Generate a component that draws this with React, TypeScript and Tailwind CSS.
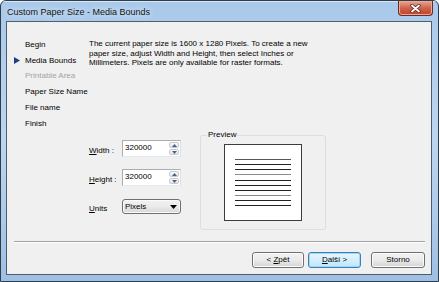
import React from 'react';

const font = "font-['Liberation_Sans',Arial,sans-serif]";

const steps = [
  { label: 'Begin', state: 'done' },
  { label: 'Media Bounds', state: 'current' },
  { label: 'Printable Area', state: 'disabled' },
  { label: 'Paper Size Name', state: 'done' },
  { label: 'File name', state: 'done' },
  { label: 'Finish', state: 'done' },
];

const SpinBox: React.FC<{ value: string }> = ({ value }) => (
  <div className="flex w-[59px] h-[17px] border border-[#abadb3] border-r-[#dbdfe6] border-b-[#e3e9ef] bg-white">
    <span className="flex-1 pl-[2px] pt-[2px] text-[8px] leading-[10px] text-black">{value}</span>
    <div className="flex flex-col w-[11px] py-px pr-px gap-px">
      <div className="flex-1 flex items-center justify-center rounded-[2px] border border-[#c7cbd1] bg-gradient-to-b from-[#fafafa] to-[#e3e6ea]">
        <svg width="5" height="3" viewBox="0 0 5 3"><polygon points="2.5,0 5,3 0,3" fill="#4d6185" /></svg>
      </div>
      <div className="flex-1 flex items-center justify-center rounded-[2px] border border-[#c7cbd1] bg-gradient-to-b from-[#fafafa] to-[#e3e6ea]">
        <svg width="5" height="3" viewBox="0 0 5 3"><polygon points="0,0 5,0 2.5,3" fill="#4d6185" /></svg>
      </div>
    </div>
  </div>
);

const Button: React.FC<{ children: React.ReactNode; w: string; primary?: boolean }> = ({ children, w, primary }) => (
  <button
    className={
      primary
        ? `${w} h-[16px] rounded-[3px] border border-[#3c7fb1] bg-gradient-to-b from-[#eaf6fd] to-[#bee6fd] text-[8px] leading-[14px] text-black shadow-[inset_0_0_0_1px_#9fd5f5]`
        : `${w} h-[16px] rounded-[3px] border border-[#707070] bg-gradient-to-b from-[#f2f2f2] via-[#ebebeb] to-[#d4d4d4] text-[8px] leading-[14px] text-black shadow-[inset_0_0_0_1px_#fcfcfc]`
    }
  >
    {children}
  </button>
);

export default function App() {
  return (
    <div className={`${font} relative w-[439px] h-[282px] flex flex-col border border-[#2f3d4b] rounded-t-[6px] bg-gradient-to-b from-[#a9c9ea] via-[#bcd6f1] to-[#9fc0e3] overflow-hidden`}>
      <div className="h-[20px] flex items-center pl-[6px] border-t border-t-[#dbe8f6]">
        <span className="text-[9px] leading-[12px] text-[#141414] [text-shadow:0_0_6px_#ffffff]">
          Custom Paper Size - Media Bounds
        </span>
      </div>

      <div className="absolute top-0 right-[5px] w-[35px] h-[15px] flex items-center justify-center rounded-b-[4px] border border-t-0 border-[#6e2a20] bg-gradient-to-b from-[#e5a796] via-[#d0634b] to-[#c0402a] shadow-[inset_0_0_0_1px_#eda996]">
        <svg width="11" height="9" viewBox="0 0 11 9">
          <path d="M2 1.5 L9 7.5 M9 1.5 L2 7.5" stroke="#5a2a24" strokeWidth="3.4" strokeLinecap="round" />
          <path d="M2 1.5 L9 7.5 M9 1.5 L2 7.5" stroke="#ffffff" strokeWidth="1.8" strokeLinecap="round" />
        </svg>
      </div>

      <div className="flex-1 ml-[5px] mr-[6px] mb-[6px] flex flex-col border border-[#4e5d6c] bg-[#f0f0f0] text-black">
        <div className="flex-1 flex">
          <div className="w-[82px] pt-[15px] pl-[7px] flex flex-col">
            {steps.map((s) => (
              <div key={s.label} className="h-[15.8px] flex items-center">
                <span className="w-[11px] flex items-center">
                  {s.state === 'current' && (
                    <svg width="6" height="7" viewBox="0 0 6 7"><polygon points="0,0 6,3.5 0,7" fill="#1f3d85" /></svg>
                  )}
                </span>
                <span className={`text-[8px] leading-[10px] whitespace-nowrap ${s.state === 'disabled' ? 'text-[#a3a3a3]' : 'text-black'}`}>
                  {s.label}
                </span>
              </div>
            ))}
          </div>

          <div className="flex-1 flex flex-col pt-[17px]">
            <p className="text-[8px] leading-[9.7px] whitespace-nowrap">
              The current paper size is 1600 x 1280 Pixels. To create a new
              <br />
              paper size, adjust Width and Height, then select Inches or
              <br />
              Millimeters. Pixels are only available for raster formats.
            </p>

            <div className="flex mt-[67px]">
              <div className="w-[111px] pt-[5px] flex flex-col">
                <div className="flex items-center h-[17px]">
                  <span className="w-[33px] text-[8px] leading-[10px] pt-[5px]"><u>W</u>idth :</span>
                  <SpinBox value="320000" />
                </div>
                <div className="flex items-center h-[17px] mt-[12px]">
                  <span className="w-[33px] text-[8px] leading-[10px] pt-[5px]"><u>H</u>eight :</span>
                  <SpinBox value="320000" />
                </div>
                <div className="flex items-center h-[15px] mt-[13px]">
                  <span className="w-[33px] text-[8px] leading-[10px] pt-[5px]"><u>U</u>nits</span>
                  <div className="w-[59px] h-[15px] flex items-center rounded-[3px] border border-[#707070] bg-gradient-to-b from-[#f2f2f2] via-[#ebebeb] to-[#d6d6d6] shadow-[inset_0_0_0_1px_#fbfbfb]">
                    <span className="flex-1 pl-[2px] text-[8px] leading-[10px]">Pixels</span>
                    <svg className="mr-[3px]" width="7" height="4" viewBox="0 0 7 4"><polygon points="0,0 7,0 3.5,4" fill="#000000" /></svg>
                  </div>
                </div>
              </div>

              <div className="relative w-[126px] h-[95px] flex items-center justify-center rounded-[3px] border border-[#d5dfe5]">
                <span className="absolute -top-[6px] left-[6px] px-px bg-[#f0f0f0] text-[8px] leading-[10px]">Preview</span>
                <div className="w-[78px] h-[77px] flex flex-col items-center justify-center gap-[4.2px] border border-[#3c3c3c] bg-white">
                  {['#555', '#222', '#222', '#8a8a8a', '#222', '#222', '#222', '#8a8a8a', '#222', '#222'].map((c, i) => (
                    <div key={i} className="w-[56px] h-px" style={{ backgroundColor: c }} />
                  ))}
                </div>
              </div>
            </div>
          </div>
        </div>

        <div className="ml-[7px] mr-[6px] border-t border-t-[#a0a0a0] border-b border-b-white" />

        <div className="flex justify-end pt-[9px] pb-[6px] pr-[6px]">
          <Button w="w-[52px]">&lt; <u>Z</u>pět</Button>
          <div className="w-[4px]" />
          <Button w="w-[53px]" primary><u>D</u>alší &gt;</Button>
          <div className="w-[10px]" />
          <Button w="w-[54px]">Storno</Button>
        </div>
      </div>
    </div>
  );
}
